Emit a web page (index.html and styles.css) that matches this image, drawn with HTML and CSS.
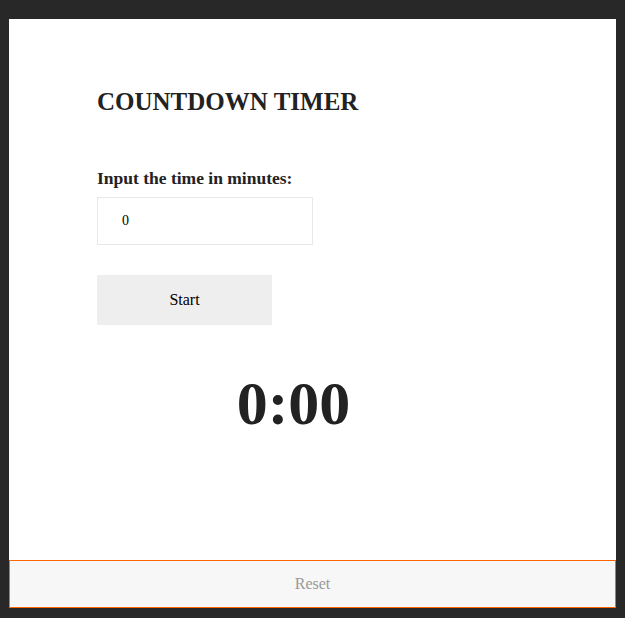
FILE: index.html
```html
<!DOCTYPE html>
<html lang="en">
<head>
<meta charset="utf-8">
<title>Countdown Timer</title>
<link rel="stylesheet" href="styles.css">
</head>
<body>
<div class="card">
  <div class="content">
    <h1 class="title">COUNTDOWN TIMER</h1>
    <label class="label" for="minutes">Input the time in minutes:</label>
    <input class="minutes" id="minutes" type="text" value="0">
    <button class="start" type="button">Start</button>
    <div class="timer">0:00</div>
  </div>
  <button class="reset" type="button">Reset</button>
</div>
</body>
</html>
```

FILE: styles.css
```css
html, body {
  height: 100%;
}
body {
  margin: 0;
  padding: 19px 9px 10px 9px;
  box-sizing: border-box;
  background: #282828;
  font-family: "Liberation Serif", "Times New Roman", serif;
  color: #222;
}
.card {
  width: 607px;
  height: 589px;
  background: #fff;
  display: flex;
  flex-direction: column;
}
.content {
  flex: 1;
  display: flex;
  flex-direction: column;
  align-items: flex-start;
  padding: 70px 88px 0;
}
.title {
  margin: 0;
  font-size: 25px;
  line-height: 25px;
  font-weight: bold;
  color: #222;
}
.label {
  margin-top: 55px;
  font-size: 17.5px;
  line-height: 18px;
  font-weight: bold;
  color: #222;
}
.minutes {
  margin-top: 10px;
  box-sizing: border-box;
  width: 216px;
  height: 48px;
  border: 1px solid #e8e8e8;
  padding: 0 0 0 24px;
  font-family: "Liberation Serif", "Times New Roman", serif;
  font-size: 14px;
  color: #000;
  outline: none;
}
.start {
  margin-top: 30px;
  width: 175px;
  height: 50px;
  border: none;
  background: #eeeeee;
  font-family: "Liberation Serif", "Times New Roman", serif;
  font-size: 16px;
  color: #000;
  padding: 0;
}
.timer {
  margin-top: 47px;
  width: 393px;
  text-align: center;
  font-size: 62px;
  line-height: 62px;
  font-weight: bold;
  color: #222;
}
.reset {
  flex-shrink: 0;
  box-sizing: border-box;
  width: 100%;
  height: 48px;
  border: 1px solid #ff6600;
  background: #f7f7f7;
  font-family: "Liberation Serif", "Times New Roman", serif;
  font-size: 16px;
  color: #999;
  padding: 0;
}
```
